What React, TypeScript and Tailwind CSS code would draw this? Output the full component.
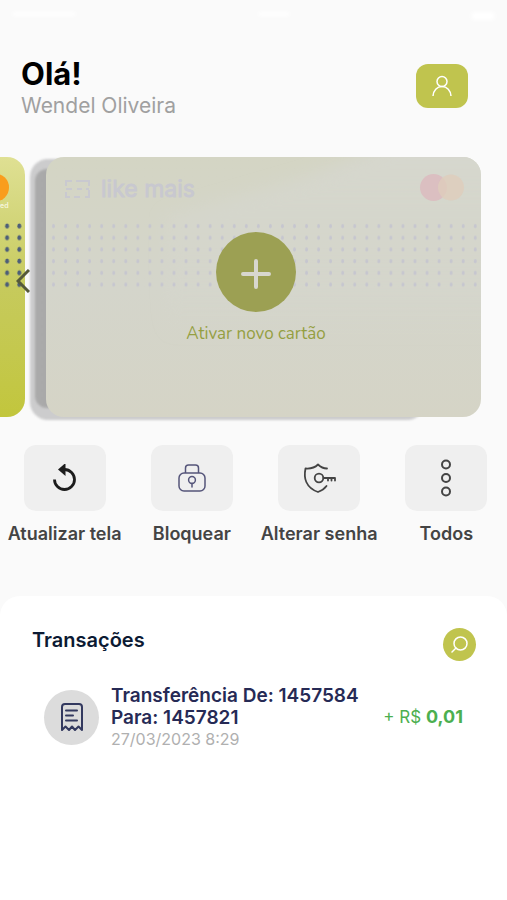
import { ReactNode } from "react";

interface ActionProps {
    label: string;
    children: ReactNode;
}

interface TransactionProps {
    title: string;
    date: string;
    amount: string;
}

const transactions: TransactionProps[] = [
    { title: 'Transferência De: 1457584 Para: 1457821', date: '27/03/2023 8:29', amount: '0,01' }
]

function Action({ label, children }: ActionProps) {
    return (
        <button type="button" className="flex flex-col items-center gap-3 cursor-pointer">
            <span className="w-[82px] h-[66px] rounded-xl bg-[#efefef] flex items-center justify-center text-[#444444]">
                {children}
            </span>
            <span className="text-[18px] leading-[22px] font-semibold text-[#444444] whitespace-nowrap">{label}</span>
        </button>
    )
}

function StatusBar() {
    return (
        <div className="h-[60px] px-3 pt-2 flex justify-between items-start">
            <span className="w-16 h-1 mt-1 rounded-full bg-white blur-[2px]" />
            <span className="w-8 h-1 mt-1 rounded-full bg-white blur-[2px]" />
            <span className="w-6 h-2 mt-1 rounded-full bg-white blur-[2px]" />
        </div>
    )
}

function Header() {
    return (
        <header className="flex justify-between items-start pl-[21px] pr-[39px]">
            <div>
                <h1 className="text-[31px] leading-7 font-bold text-black">Olá!</h1>
                <p className="text-[21px] leading-6 mt-1.5 text-[#a0a0a0]">Wendel Oliveira</p>
            </div>
            <button type="button" aria-label="Perfil" className="w-[52px] h-11 mt-1 rounded-xl bg-[#c0c44e] text-white flex items-center justify-center cursor-pointer">
                <svg width="20" height="22" viewBox="0 0 20 22" fill="none" stroke="currentColor" strokeWidth="1.5">
                    <circle cx="10" cy="6.5" r="5" />
                    <path d="M1 21c.3-5.500 4-9.500 9-9.500s8.700 4 9 9.500" />
                </svg>
            </button>
        </header>
    )
}

function PreviousCard() {
    return (
        <div className="w-[25px] h-[260px] shrink-0 rounded-r-[18px] overflow-hidden bg-linear-to-b from-[#dfe093] via-[#c6ca5c] to-[#c2c63c]">
            <svg width="25" height="260" viewBox="0 0 25 260">
                <defs>
                    <pattern id="dotsPrevious" x="1" y="63" width="12.200" height="11.700" patternUnits="userSpaceOnUse">
                        <ellipse cx="6.100" cy="6" rx="2" ry="2.500" fill="#4d5e78" />
                    </pattern>
                </defs>
                <circle cx="-5" cy="30.500" r="14" fill="#f99d1c" />
                <text x="0" y="51" fontSize="7" fontWeight="600" fill="#f7f6dc">ed</text>
                <rect x="1" y="63" width="24.400" height="70.200" fill="url(#dotsPrevious)" />
            </svg>
        </div>
    )
}

function NewCard() {
    return (
        <div className="relative flex-1 h-[260px]">
            <div className="absolute -left-4 right-14 top-[2px] -bottom-[3px] rounded-[18px] bg-[#cccccd] blur-[1px]" />
            <div className="absolute -left-[11px] right-14 top-3 bottom-[9px] rounded-xl bg-linear-to-r from-[#aaaaaa] to-[#999999] blur-[1px]" />
            <button type="button" className="relative w-full h-full rounded-[18px] overflow-hidden bg-linear-to-b from-[#d4d5c4] via-[#d4d5cb] to-[#d5d4c6] cursor-pointer">
                <svg className="absolute inset-0 w-full h-full" viewBox="0 0 435 260" fill="none">
                    <defs>
                        <linearGradient id="shine" x1="0" y1="0" x2="0" y2="1">
                            <stop offset="0" stopColor="#d6d7cf" />
                            <stop offset="1" stopColor="#d6d7cf" stopOpacity="0" />
                        </linearGradient>
                        <filter id="soft">
                            <feGaussianBlur stdDeviation="8" />
                        </filter>
                        <pattern id="dots" x="1.500" y="63" width="12.050" height="11.700" patternUnits="userSpaceOnUse">
                            <ellipse cx="6" cy="6" rx="1.400" ry="2.200" fill="#c6c6cf" />
                        </pattern>
                    </defs>
                    <path d="M460-20H365L260 20 120 60v120h340z" fill="url(#shine)" filter="url(#soft)" />
                    <rect x="1.500" y="63" width="433.500" height="70.200" fill="url(#dots)" />
                    <path d="M20 29v-5h6m4 0h13v5m0 4v7h-4m-5 0h-6m-4 0h-4v-5m0-3h6m5 0h5m4 0h3" stroke="#c9c9d0" strokeWidth="2" />
                    <text x="55" y="40" fontSize="23" fill="#c8c8d0" stroke="#c8c8d0" strokeWidth=".8">like mais</text>
                    <circle cx="387.500" cy="30.500" r="13.500" fill="#dbbfc1" />
                    <circle cx="405" cy="30.500" r="13" fill="#decdbb" fillOpacity=".8" />
                </svg>
                <span className="relative h-full flex flex-col items-center pt-[75px] pr-[15px]">
                    <span className="w-20 h-20 pt-1 rounded-full bg-[#9ca053] flex items-center justify-center">
                        <svg width="30" height="30" viewBox="0 0 30 30" fill="none" stroke="#d8d7ce" strokeWidth="4" strokeLinecap="round">
                            <path d="M15 2v26M2 15h26" />
                        </svg>
                    </span>
                    <span className="mt-2.5 text-[17px] leading-6 text-[#949f42] font-['Nunito','Lato',sans-serif]">Ativar novo cartão</span>
                </span>
            </button>
        </div>
    )
}

export default function App() {
    return (
        <div className="min-h-screen flex flex-col bg-[#fafafa] overflow-x-hidden font-['Inter','Liberation_Sans',sans-serif]">
            <StatusBar />
            <Header />

            <section className="relative flex gap-[21px] pr-[26px] mt-[39px]">
                <PreviousCard />
                <NewCard />
                <button type="button" aria-label="Cartão anterior" className="absolute left-4 top-28 text-[#55593a] cursor-pointer">
                    <svg width="14" height="24" viewBox="0 0 14 24" fill="none" stroke="currentColor" strokeWidth="3">
                        <path d="M13 1 2 12l11 11" />
                    </svg>
                </button>
            </section>

            <nav className="grid grid-cols-4 pl-px -mr-[3px] mt-7">
                <Action label="Atualizar tela">
                    <svg width="24" height="28" viewBox="0 0 24 28" fill="none">
                        <path d="M1.500 15.500a10 10 0 1 0 10-10" stroke="#1c1c1c" strokeWidth="2.800" />
                        <path d="M12.500-1v13L5 5.500z" fill="#1c1c1c" />
                    </svg>
                </Action>
                <Action label="Bloquear">
                    <svg width="28" height="28" viewBox="0 0 28 28" fill="none" stroke="#55557a" strokeWidth="1.500">
                        <path d="M7.500 9V4a3 3 0 0 1 3-3h7a3 3 0 0 1 3 3v5" />
                        <rect x="1" y="9" width="26" height="18" rx="5" />
                        <circle cx="14" cy="16" r="3.400" />
                        <path d="M14 19.200V23" strokeLinecap="round" />
                    </svg>
                </Action>
                <Action label="Alterar senha">
                    <svg width="34" height="30" viewBox="0 0 34 30" fill="none" stroke="currentColor" strokeWidth="1.800" strokeLinecap="round" strokeLinejoin="round">
                        <path d="M25 5.500c-4 0-6.500-1.500-9-4-3 3-7 4.500-12.500 4-1 5-.8 10 .8 13.500 2 4.500 6 8 11.700 10 3.500-1.300 6.500-3.300 8.500-6" />
                        <circle cx="17" cy="15" r="4.300" />
                        <path d="M21.500 15H33v2.500M29.500 15v2.500M26 15v2.500" />
                    </svg>
                </Action>
                <Action label="Todos">
                    <svg width="12" height="38" viewBox="0 0 12 38" fill="none" stroke="currentColor" strokeWidth="2">
                        <circle cx="6" cy="5.500" r="4" />
                        <circle cx="6" cy="19" r="4" />
                        <circle cx="6" cy="32.500" r="4" />
                    </svg>
                </Action>
            </nav>

            <main className="flex-1 mt-[51px] pt-8 px-8 rounded-t-[20px] bg-white">
                <div className="flex justify-between -mr-px">
                    <h2 className="text-[20px] leading-6 font-semibold text-[#0c1a33]">Transações</h2>
                    <button type="button" aria-label="Buscar" className="w-[33px] h-[33px] rounded-full bg-[#c0c44e] text-white flex items-center justify-center cursor-pointer">
                        <svg width="17" height="17" viewBox="0 0 17 17" fill="none" stroke="currentColor" strokeWidth="1.500" strokeLinecap="round">
                            <circle cx="9.500" cy="7.500" r="6.500" />
                            <path d="m5 12-4 4" />
                        </svg>
                    </button>
                </div>

                <ul className="mt-6">
                    {transactions.map((item) => (
                        <li key={item.title} className="flex items-center gap-3 pl-3 pr-3">
                            <span className="w-[55px] h-[55px] shrink-0 rounded-full bg-[#dcdcdc] flex items-center justify-center">
                                <svg width="22" height="28" viewBox="0 0 22 28" fill="none" stroke="#33395f" strokeWidth="2" strokeLinecap="round" strokeLinejoin="round">
                                    <path d="M1 27V4a3 3 0 0 1 3-3h14a3 3 0 0 1 3 3v23l-3.500-3.500L14 27l-3-3.500L8 27l-3.500-3.500z" />
                                    <path d="M5 7.500h11M5 12.500h7M5 17.500h11" />
                                </svg>
                            </span>
                            <div className="flex-1">
                                <p className="text-[19px] leading-[22px] font-semibold text-[#262a55]">{item.title}</p>
                                <p className="text-[16px] leading-5 text-[#b0b0b0]">{item.date}</p>
                            </div>
                            <p className="shrink-0 text-[17px] leading-6 text-[#4caf50]">
                                + R$ <strong className="text-[18px] font-bold">{item.amount}</strong>
                            </p>
                        </li>
                    ))}
                </ul>
            </main>
        </div>
    )
}
